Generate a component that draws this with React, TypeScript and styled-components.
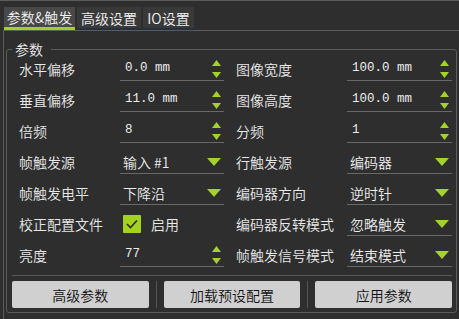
import React from 'react';
import styled, { createGlobalStyle } from 'styled-components';

const Global = createGlobalStyle`
  html, body { margin: 0; padding: 0; background: #2e2e2e; }
  body { font-family: "Noto Sans CJK SC", "Noto Sans", sans-serif; font-weight: 350; }
  * { box-sizing: border-box; }
`;

const Window = styled.div`
  width: 459px;
  height: 319px;
  border-top: 1px solid #5b5b5b;
  padding-left: 3px;
  display: flex;
  flex-direction: column;
  background: #2e2e2e;
  overflow: hidden;
`;

const TabBar = styled.div`
  height: 29px;
  padding-left: 1px;
  display: flex;
  align-items: flex-end;
  gap: 2px;
`;

const Tab = styled.div<{ $active?: boolean; $w: number }>`
  width: ${(p) => p.$w}px;
  height: 23px;
  display: flex;
  align-items: center;
  justify-content: center;
  font-size: 14px;
  line-height: 1;
  color: #f2f2f2;
  background: ${(p) => (p.$active ? '#484848' : '#393939')};
  border-bottom: ${(p) => (p.$active ? '3px solid #9fd12a' : '2px solid #243040')};
  white-space: nowrap;
`;

const Pane = styled.div`
  flex: 1;
  border-top: 1px solid #5b5b5b;
  border-left: 1px solid #5b5b5b;
  padding: 10px 2px 0 2px;
`;

const Group = styled.fieldset`
  margin: 0;
  min-width: 0;
  border: 1px solid #5b5b5b;
  border-radius: 3px;
  padding: 0 4px 4px 5px;
`;

const Legend = styled.legend`
  padding: 0 8px 0 3px;
  margin: 0;
  font-size: 14px;
  line-height: 16px;
  color: #ececec;
`;

const Grid = styled.div`
  display: grid;
  grid-template-columns: 103px 104px 113px 105px;
  grid-auto-rows: 24px;
  column-gap: 5px;
  row-gap: 7px;
`;

const Label = styled.div`
  padding-left: 7px;
  display: flex;
  align-items: center;
  font-size: 14px;
  line-height: 1;
  color: #e8e8e8;
  white-space: nowrap;
`;

const Field = styled.div<{ $plain?: boolean; $mono?: boolean }>`
  display: flex;
  align-items: center;
  justify-content: space-between;
  padding: 0 3px 0 ${(p) => (p.$mono ? 5 : 3)}px;
  border-bottom: ${(p) => (p.$plain ? 'none' : '1px solid #686868')};
`;

const Value = styled.span<{ $mono?: boolean }>`
  color: #ececec;
  white-space: pre;
  font-family: ${(p) => (p.$mono ? '"Liberation Mono", monospace' : '"Noto Sans CJK SC", sans-serif')};
  font-size: ${(p) => (p.$mono ? '12.5px' : '14px')};
  line-height: 1;
`;

const CheckWrap = styled.label`
  display: flex;
  align-items: center;
  gap: 10px;
  font-size: 14px;
  color: #ececec;
  line-height: 1;
`;

const CheckBox = styled.span`
  width: 18px;
  height: 18px;
  background: #a3d21f;
  border-radius: 1px;
  display: flex;
  align-items: center;
  justify-content: center;
`;

const Divider = styled.div`
  height: 1px;
  background: #585858;
  margin-top: 8px;
`;

const ButtonRow = styled.div`
  margin-top: 5px;
  height: 27px;
  display: flex;
  gap: 7px;
`;

const Button = styled.button`
  flex: 1;
  height: 27px;
  border: none;
  border-radius: 2px;
  background: #d0d0d0;
  color: #111;
  font-family: "Noto Sans CJK SC", sans-serif;
  font-weight: 350;
  font-size: 14px;
  line-height: 1;
  padding: 0;
`;

const VSep = styled.div`
  width: 1px;
  background: #555;
`;

const Spin = () => (
  <svg width="9" height="18" viewBox="0 0 9 18">
    <polygon points="4.5,0 9,6 0,6" fill="#a3d22a" />
    <polygon points="0,12 9,12 4.5,18" fill="#a3d22a" />
  </svg>
);

const Drop = () => (
  <svg width="14" height="8" viewBox="0 0 14 8">
    <polygon points="0,0 14,0 7,8" fill="#a3d22a" />
  </svg>
);

type Item =
  | { label: string; kind: 'spin'; value: string }
  | { label: string; kind: 'combo'; value: string }
  | { label: string; kind: 'check'; value: string };

const rows: [Item, Item][] = [
  [{ label: '水平偏移', kind: 'spin', value: '0.0 mm' }, { label: '图像宽度', kind: 'spin', value: '100.0 mm' }],
  [{ label: '垂直偏移', kind: 'spin', value: '11.0 mm' }, { label: '图像高度', kind: 'spin', value: '100.0 mm' }],
  [{ label: '倍频', kind: 'spin', value: '8' }, { label: '分频', kind: 'spin', value: '1' }],
  [{ label: '帧触发源', kind: 'combo', value: '输入 #1' }, { label: '行触发源', kind: 'combo', value: '编码器' }],
  [{ label: '帧触发电平', kind: 'combo', value: '下降沿' }, { label: '编码器方向', kind: 'combo', value: '逆时针' }],
  [{ label: '校正配置文件', kind: 'check', value: '启用' }, { label: '编码器反转模式', kind: 'combo', value: '忽略触发' }],
  [{ label: '亮度', kind: 'spin', value: '77' }, { label: '帧触发信号模式', kind: 'combo', value: '结束模式' }],
];

const Cell = ({ item }: { item: Item }) => (
  <>
    <Label>{item.label}</Label>
    {item.kind === 'check' ? (
      <Field $plain>
        <CheckWrap>
          <CheckBox>
            <svg width="14" height="12" viewBox="0 0 14 12">
              <path d="M2 6 L5.5 9.5 L12 2.5" stroke="#2a2a2a" strokeWidth="1.6" fill="none" />
            </svg>
          </CheckBox>
          {item.value}
        </CheckWrap>
      </Field>
    ) : item.kind === 'spin' ? (
      <Field $mono>
        <Value $mono>{item.value}</Value>
        <Spin />
      </Field>
    ) : (
      <Field>
        <Value>{item.value}</Value>
        <Drop />
      </Field>
    )}
  </>
);

export default function App() {
  return (
    <>
      <Global />
      <Window>
        <TabBar>
          <Tab $active $w={71}>参数&amp;触发</Tab>
          <Tab $w={64}>高级设置</Tab>
          <Tab $w={51}>IO设置</Tab>
        </TabBar>
        <Pane>
          <Group>
            <Legend>参数</Legend>
            <Grid>
              {rows.map(([l, r], i) => (
                <React.Fragment key={i}>
                  <Cell item={l} />
                  <Cell item={r} />
                </React.Fragment>
              ))}
            </Grid>
            <Divider />
            <ButtonRow>
              <Button>高级参数</Button>
              <VSep />
              <Button>加载预设配置</Button>
              <VSep />
              <Button>应用参数</Button>
            </ButtonRow>
          </Group>
        </Pane>
      </Window>
    </>
  );
}
